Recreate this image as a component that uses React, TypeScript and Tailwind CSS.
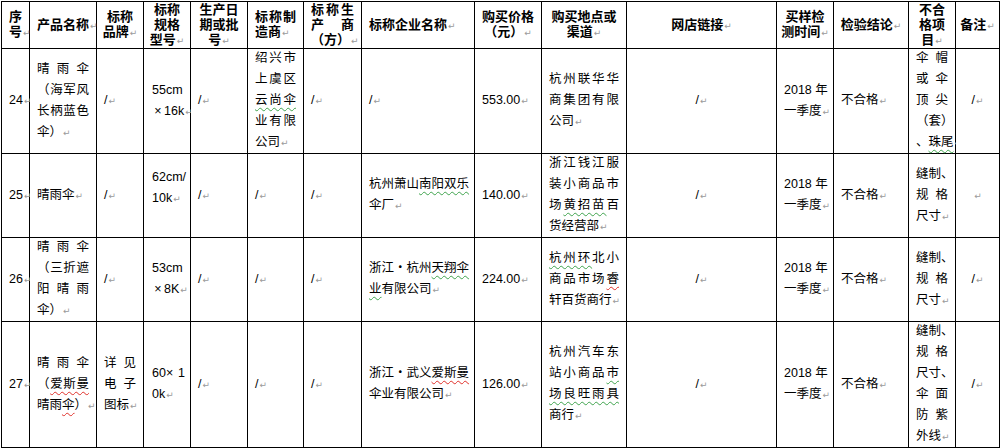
import type { ReactNode } from "react";
import clsx from "clsx";

const Mark = () => <span className="ml-px font-['DejaVu_Sans'] text-[9px] font-normal text-[#9a9a9a]">↵</span>;

const G = ({ children }: { children: ReactNode }) => (
  <span className="underline decoration-[#3fa34d] decoration-wavy decoration-1 underline-offset-[3px]">{children}</span>
);
const R = ({ children }: { children: ReactNode }) => (
  <span className="underline decoration-[#e0302a] decoration-wavy decoration-1 underline-offset-[3px]">{children}</span>
);

// full-width multiplication sign, as in the document font
const X = () => <span className="inline-block w-[12px] text-center">×</span>;

type CellProps = {
  lines: ReactNode[];
  center?: boolean;
  justify?: boolean;
  head?: boolean;
  className?: string;
};

const Cell = ({ lines, center, justify, head, className }: CellProps) => (
  <div
    className={clsx(
      "flex flex-col justify-center whitespace-nowrap bg-white px-[7px] text-black",
      head ? "text-[13px] font-bold leading-[15px]" : "text-[12.5px] leading-[21px]",
      center && "items-center text-center",
      className
    )}
  >
    {lines.map((l, i) => {
      const last = i === lines.length - 1;
      return (
        <div key={i} className={clsx(justify && !last && "w-full text-justify [text-align-last:justify]")}>
          {l}
          {last && <Mark />}
        </div>
      );
    })}
  </div>
);

const Slash = ({ center }: { center?: boolean }) => <Cell lines={["/"]} center={center} />;

export default function App() {
  return (
    <div className="min-h-screen bg-white pl-px pt-px font-['Liberation_Sans','Noto_Sans_CJK_SC',sans-serif]">
      <div className="grid w-fit grid-cols-[27px_66px_46px_46px_56px_55px_57px_112px_66px_84px_149px_56px_74px_46px_43px] grid-rows-[46px_104px_83px_83px_125px] gap-px bg-black p-px">
        {/* header */}
        <Cell head lines={["序", "号"]} className="px-[3px]" />
        <Cell head lines={["产品名称"]} />
        <Cell head center lines={["标称", "品牌"]} />
        <Cell head center lines={["标称", "规格", "型号"]} />
        <Cell head center lines={["生产日", "期或批", "号"]} />
        <Cell head justify lines={["标称制", "造商"]} className="px-[6px]" />
        <Cell head justify lines={["标称生", "产商", "（方）"]} />
        <Cell head lines={["标称企业名称"]} />
        <Cell head center lines={["购买价格", "（元）"]} />
        <Cell head center lines={["购买地点或", "渠道"]} />
        <Cell head center lines={["网店链接"]} />
        <Cell head center lines={["买样检", "测时间"]} />
        <Cell head center lines={["检验结论"]} />
        <Cell head center lines={["不合", "格项", "目"]} />
        <Cell head center lines={["备注"]} />

        {/* 24 */}
        <Cell lines={["24"]} />
        <Cell justify lines={["晴雨伞", "（海军风", "长柄蓝色", "伞）"]} />
        <Slash />
        <Cell justify lines={["55cm", <span key="x"><X />16k</span>]} className="pl-[8px]" />
        <Slash />
        <Cell justify lines={["绍兴市", "上虞区", <G key="g">云尚伞</G>, "业有限", "公司"]} />
        <Slash />
        <Slash />
        <Cell lines={["553.00"]} />
        <Cell justify lines={["杭州联华华", "商集团有限", "公司"]} />
        <Slash center />
        <Cell justify lines={["2018 年", "一季度"]} className="px-[6px]" />
        <Cell lines={["不合格"]} />
        <Cell justify lines={["伞帽", "或伞", "顶尖", "（套）", <span key="z">、<G>珠尾</G></span>]} className="px-[6px]" />
        <Slash center />

        {/* 25 */}
        <Cell lines={["25"]} />
        <Cell lines={["晴雨伞"]} />
        <Slash />
        <Cell justify lines={["62cm/", "10k"]} className="pb-[15px] pl-[8px]" />
        <Slash />
        <Slash />
        <Slash />
        <Cell lines={[<span key="a">杭州萧山<G>南阳双乐</G></span>, "伞厂"]} className="px-[5px]" />
        <Cell lines={["140.00"]} />
        <Cell justify lines={["浙江钱江服", "装小商品市", <span key="b">场<G>黄招苗</G>百</span>, "货经营部"]} />
        <Slash center />
        <Cell justify lines={["2018 年", "一季度"]} className="px-[6px]" />
        <Cell lines={["不合格"]} />
        <Cell justify lines={["缝制、", "规格", "尺寸"]} className="px-[6px]" />
        <Cell center lines={[""]} />

        {/* 26 */}
        <Cell lines={["26"]} />
        <Cell justify lines={["晴雨伞", "（三折遮", "阳晴雨", "伞）"]} />
        <Slash />
        <Cell justify lines={["53cm", <span key="x"><X />8K</span>]} className="pl-[8px]" />
        <Slash />
        <Slash />
        <Slash />
        <Cell lines={[<span key="c">浙江・杭州<G>天翔伞</G></span>, <span key="d"><G>业</G>有限公司</span>]} className="px-[5px]" />
        <Cell lines={["224.00"]} />
        <Cell justify lines={[<span key="e"><G>杭州环</G>北小</span>, <span key="f">商品市场<R>睿</R></span>, "轩百货商行"]} />
        <Slash center />
        <Cell justify lines={["2018 年", "一季度"]} className="px-[6px]" />
        <Cell lines={["不合格"]} />
        <Cell justify lines={["缝制、", "规格", "尺寸"]} className="px-[6px]" />
        <Slash center />

        {/* 27 */}
        <Cell lines={["27"]} />
        <Cell justify lines={["晴雨伞", <span key="g">（<R>爱斯曼</R></span>, <span key="h">晴雨<R>伞</R>）</span>]} />
        <Cell justify lines={["详见", "电子", "图标"]} />
        <Cell justify lines={[<span key="x">60<X />1</span>, "0k"]} className="pl-[8px]" />
        <Slash />
        <Slash />
        <Slash />
        <Cell lines={[<span key="i">浙江・武义<R>爱斯曼</R></span>, "伞业有限公司"]} className="px-[5px]" />
        <Cell lines={["126.00"]} />
        <Cell justify lines={["杭州汽车东", <span key="j">站小商品<G>市</G></span>, <G key="k">场良旺雨具</G>, "商行"]} />
        <Slash center />
        <Cell justify lines={["2018 年", "一季度"]} className="px-[6px]" />
        <Cell lines={["不合格"]} />
        <Cell justify lines={["缝制、", "规格", "尺寸、", "伞面", "防紫", "外线"]} className="px-[6px]" />
        <Slash center />
      </div>
    </div>
  );
}
